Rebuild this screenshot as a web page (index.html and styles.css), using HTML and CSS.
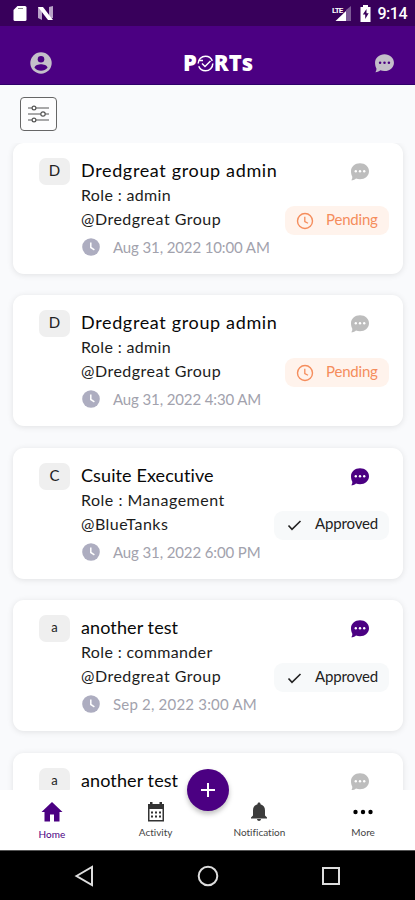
FILE: index.html
```html
<!DOCTYPE html>
<html lang="en">
<head>
  <meta charset="UTF-8">
  <meta name="viewport" content="width=device-width, initial-scale=1">
  <title>PORTs</title>
  <link rel="stylesheet" href="styles.css">
</head>
<body>

<!-- shared icons -->
<svg class="sprite" width="0" height="0">
  <symbol id="chat" viewBox="0 0 20 20">
    <path fill="currentColor" d="M10 1.2c5 0 9 3.500 9 8s-4 8-9 8c-1.500 0-2.800-.3-4-.8-1 .9-2.500 1.700-4.800 1.900.9-1 1.200-2.200 1.100-3.600C1.500 13.200 1 11.300 1 9.200c0-4.500 4-8 9-8z"/>
    <g><circle cx="5.800" cy="9.300" r="1.200"/><circle cx="10" cy="9.300" r="1.200"/><circle cx="14.200" cy="9.300" r="1.200"/></g>
  </symbol>
  <symbol id="clock" viewBox="0 0 18 18">
    <circle cx="9" cy="9" r="8.800" fill="#adadc0"/>
    <path d="M8.800 4.500v5l3.600 2.300" fill="none" stroke="#fff" stroke-width="1.500"/>
  </symbol>
  <symbol id="pending" viewBox="0 0 18 18">
    <circle cx="9" cy="9" r="7.500" fill="none" stroke="currentColor" stroke-width="1.400"/>
    <path d="M8.800 4.800v4.700l3.200 1.800" fill="none" stroke="currentColor" stroke-width="1.300"/>
  </symbol>
  <symbol id="check" viewBox="0 0 18 18">
    <path d="M3.500 9.500l3.500 3.800 8.500-8.300" fill="none" stroke="currentColor" stroke-width="1.600"/>
  </symbol>
</svg>

<div class="app">
  <div class="status">
    <svg width="14" height="17" viewBox="0 0 14 17"><path fill="#fff" d="M4.500 1H12a1.500 1.500 0 0 1 1.500 1.500v12A1.500 1.500 0 0 1 12 16H2a1.500 1.500 0 0 1-1.500-1.500V5z"/><path d="M5 3.500h5" stroke="#888" stroke-width="1"/></svg>
    <svg class="n-logo" width="17" height="15" viewBox="0 0 17 15"><path fill="#b9a3c8" d="M1 1l4 1v12l-4-2zM12 1l4-1v12l-4 1z"/><path fill="#fff" d="M1 1h5l10 13h-5z"/></svg>
    <div class="status-right">
      <svg width="20" height="17" viewBox="0 0 20 17"><path fill="#7d5a96" d="M14 5l5-4v15h-5z"/><path fill="#fff" d="M3.500 16L14 6v10z"/><text x="0" y="7.500" class="lte">LTE</text></svg>
      <svg class="battery" width="11" height="17" viewBox="0 0 11 17"><path fill="#fff" d="M3 2V0h5v2h2.500v15H.5V2z"/><path fill="#38005b" d="M6.500 4L2.800 9.500h2.400V14l3.500-5.800H6.500z"/></svg>
      <span class="time">9:14</span>
    </div>
  </div>

  <div class="header">
    <svg width="22" height="22" viewBox="0 0 22 22"><circle cx="11" cy="11" r="10.700" fill="#c4bfca"/><circle cx="11" cy="7.200" r="3.300" fill="#4b0082"/><path fill="#4b0082" d="M4.500 15.700c0-2.400 4.300-3.500 6.500-3.500s6.500 1.100 6.500 3.500c-3 4-10 4-13 0z"/></svg>
    <div class="logo">
      <span>P</span>
      <svg width="17" height="17" viewBox="0 0 17 17"><circle cx="8.500" cy="8.500" r="7.300" fill="none" stroke="#fff" stroke-width="1.500" stroke-dasharray="20 2.900"/><path d="M2 5.500h4M5 8.500l3 3 5.500-5.500" fill="none" stroke="#fff" stroke-width="1.500"/></svg>
      <span>RTs</span>
    </div>
    <svg class="chat-top" width="21" height="21"><use href="#chat"/></svg>
  </div>

  <div class="filter-row">
    <button class="filter">
      <svg width="21" height="20" viewBox="0 0 21 20" fill="#fff" stroke="#555" stroke-width="1.200"><path d="M0 4h21M0 10h21M0 16h21"/><circle cx="6" cy="4" r="1.900"/><circle cx="15" cy="10" r="2.200"/><circle cx="6" cy="16" r="1.900"/></svg>
    </button>
  </div>

  <div class="list">
    <div class="card">
      <div class="tag">D</div>
      <div class="info">
        <h3 class="wider">Dredgreat group admin</h3>
        <p>Role : admin</p>
        <p class="wide">@Dredgreat Group</p>
        <div class="date"><svg width="18" height="18"><use href="#clock"/></svg><span>Aug 31, 2022 10:00 AM</span></div>
      </div>
      <div class="side">
        <svg class="chat" width="20" height="20"><use href="#chat"/></svg>
        <div class="badge pending"><svg width="18" height="18"><use href="#pending"/></svg><span>Pending</span></div>
      </div>
    </div>

    <div class="card">
      <div class="tag">D</div>
      <div class="info">
        <h3 class="wider">Dredgreat group admin</h3>
        <p>Role : admin</p>
        <p class="wide">@Dredgreat Group</p>
        <div class="date"><svg width="18" height="18"><use href="#clock"/></svg><span>Aug 31, 2022 4:30 AM</span></div>
      </div>
      <div class="side">
        <svg class="chat" width="20" height="20"><use href="#chat"/></svg>
        <div class="badge pending"><svg width="18" height="18"><use href="#pending"/></svg><span>Pending</span></div>
      </div>
    </div>

    <div class="card">
      <div class="tag">C</div>
      <div class="info">
        <h3>Csuite Executive</h3>
        <p class="wide">Role : Management</p>
        <p class="wide">@BlueTanks</p>
        <div class="date"><svg width="18" height="18"><use href="#clock"/></svg><span>Aug 31, 2022 6:00 PM</span></div>
      </div>
      <div class="side">
        <svg class="chat active" width="20" height="20"><use href="#chat"/></svg>
        <div class="badge approved"><svg width="18" height="18"><use href="#check"/></svg><span>Approved</span></div>
      </div>
    </div>

    <div class="card">
      <div class="tag small">a</div>
      <div class="info">
        <h3>another test</h3>
        <p>Role : commander</p>
        <p class="wide">@Dredgreat Group</p>
        <div class="date loose"><svg width="18" height="18"><use href="#clock"/></svg><span>Sep 2, 2022 3:00 AM</span></div>
      </div>
      <div class="side">
        <svg class="chat active" width="20" height="20"><use href="#chat"/></svg>
        <div class="badge approved"><svg width="18" height="18"><use href="#check"/></svg><span>Approved</span></div>
      </div>
    </div>

    <div class="card">
      <div class="tag small">a</div>
      <div class="info">
        <h3>another test</h3>
      </div>
      <div class="side">
        <svg class="chat" width="20" height="20"><use href="#chat"/></svg>
      </div>
    </div>
  </div>

  <div class="tabs">
    <div class="tab current">
      <svg width="22" height="22" viewBox="0 0 22 22"><path fill="currentColor" d="M11 1l10.500 10H18.500v9.500H13v-7H9v7H3.500V11H.5z"/></svg>
      <span>Home</span>
    </div>
    <div class="tab">
      <svg width="22" height="22" viewBox="0 0 22 22"><path fill="#333" d="M3 3h2V1h2.500v2h7V1H17v2h2v17.500H3z"/><path fill="#fff" d="M4.500 8h13v11h-13z"/><path d="M6 11.500h10M6 15.500h10" stroke="#333" stroke-width="2" stroke-dasharray="2 2"/></svg>
      <span>Activity</span>
    </div>
    <div class="tab">
      <svg width="22" height="22" viewBox="0 0 22 22"><path fill="#3c3c3c" d="M11 1.500c1 0 1.500.7 1.500 1.700 3 .9 4.500 3 4.500 6.300v5l2 2v1H3v-1l2-2v-5c0-3.300 1.500-5.400 4.500-6.300 0-1 .5-1.700 1.500-1.700zM9 18h4c0 2.500-4 2.500-4 0z"/></svg>
      <span>Notification</span>
    </div>
    <div class="tab">
      <svg width="22" height="22" viewBox="0 0 22 22"><circle cx="3.500" cy="11" r="2.200"/><circle cx="11" cy="11" r="2.200"/><circle cx="18.500" cy="11" r="2.200"/></svg>
      <span>More</span>
    </div>
    <button class="add"><svg width="18" height="18" viewBox="0 0 18 18"><path d="M9 2v14M2 9h14" stroke="#fff" stroke-width="2"/></svg></button>
  </div>

  <div class="android">
    <svg width="22" height="22" viewBox="0 0 22 22"><path d="M2.500 11L18 2v18z"/></svg>
    <svg width="22" height="22" viewBox="0 0 22 22"><circle cx="11" cy="11" r="9.300"/></svg>
    <svg width="22" height="22" viewBox="0 0 22 22"><rect x="3" y="3" width="16" height="16"/></svg>
  </div>
</div>

</body>
</html>
```
FILE: styles.css
```css
* {
  box-sizing: border-box;
}
body {
  margin: 0;
  font-family: Lato, "Open Sans", sans-serif;
  font-variant-ligatures: none;
  color: #222;
}
h3, p {
  margin: 0;
  white-space: nowrap;
}
svg {
  display: block;
  flex: none;
}
.sprite {
  display: none;
}
.app {
  width: 415px;
  height: 900px;
  display: flex;
  flex-direction: column;
  background: #f9fafc;
  overflow: hidden;
}
.status {
  height: 26px;
  flex: none;
  background: #38005b;
  display: flex;
  align-items: center;
  padding: 1px 8px 0 13px;
}
.n-logo {
  margin-left: 10px;
}
.status-right {
  margin-left: auto;
  display: flex;
  align-items: center;
}
.lte {
  font: bold 8px Roboto, sans-serif;
  fill: #fff;
  letter-spacing: -0.8px;
}
.battery {
  margin: 0 7px 0 8px;
}
.time {
  font: 500 16px/18px Roboto, sans-serif;
  color: #fff;
  letter-spacing: -0.5px;
}
.header {
  height: 59px;
  flex: none;
  background: #4b0082;
  border-bottom: 1px solid #30006a;
  display: flex;
  align-items: center;
  justify-content: space-between;
  padding: 16px 20px 0 30px;
}
.logo {
  display: flex;
  align-items: center;
  margin-left: 10px;
  color: #fff;
  font-family: "Open Sans", sans-serif;
  font-size: 22px;
  line-height: 22px;
  font-weight: 800;
}
.logo span {
  margin-top: -2px;
}
.chat-top, .chat {
  fill: #fff;
}
.chat-top {
  color: #c4bfca;
  fill: #4b0082;
}
.filter-row {
  height: 58px;
  flex: none;
  padding: 12px 20px;
}
.filter {
  width: 37px;
  height: 34px;
  padding: 0;
  display: flex;
  align-items: center;
  justify-content: center;
  background: #fdfdfe;
  border: 1px solid #666;
  border-radius: 4px;
}
.list {
  flex: 1;
  min-height: 0;
  overflow: hidden;
  padding: 0 12px 0 13px;
}
.card {
  display: flex;
  height: 131px;
  margin-bottom: 21.400px;
  padding: 14px 14px 0 26px;
  background: #fff;
  border-radius: 11px;
  box-shadow: 0 1px 6px rgba(0, 0, 0, 0.1);
}
.tag {
  width: 31px;
  height: 27px;
  margin: 1px 11px 0 0;
  border-radius: 7px;
  background: #efefef;
  text-align: center;
  font-size: 15px;
  line-height: 25px;
}
.tag.small {
  font-size: 13px;
}
.info {
  flex: 1;
  min-width: 0;
  color: #1c1c1c;
}
.info h3 {
  margin: 4px 0 3px;
  font-size: 18px;
  line-height: 19px;
  font-weight: 400;
  letter-spacing: 0.1px;
  color: #080808;
}
.info p {
  font-size: 16px;
  line-height: 24px;
  letter-spacing: 0.35px;
}
.info p.wide {
  letter-spacing: 0.5px;
}
.info h3.wider {
  letter-spacing: 0.65px;
}
.date {
  display: flex;
  align-items: center;
  gap: 13px;
  height: 32px;
  padding-left: 1px;
  font-size: 15px;
  letter-spacing: -0.12px;
  color: #a2a2ad;
  white-space: nowrap;
}
.date.loose {
  letter-spacing: 0.2px;
}
.side {
  display: flex;
  flex-direction: column;
  align-items: flex-end;
}
.chat {
  margin: 5px 19px 24px 0;
  color: #bdbdbd;
}
.chat.active {
  color: #4b0082;
}
.badge {
  display: flex;
  align-items: center;
  height: 29px;
  border-radius: 9px;
  padding: 0 11px;
  font-size: 15px;
}
.badge span {
  padding-bottom: 4px;
}
.pending {
  width: 104px;
  gap: 12px;
  background: #fff3ec;
  color: #f58d5c;
  letter-spacing: -0.2px;
}
.approved {
  width: 115px;
  gap: 12px;
  background: #f7f9fa;
  color: #222;
  letter-spacing: -0.15px;
}
.tabs {
  position: relative;
  height: 60px;
  flex: none;
  display: flex;
  background: #fff;
}
.tab {
  flex: 1;
  display: flex;
  flex-direction: column;
  align-items: center;
  padding-top: 11px;
  font-size: 10px;
  line-height: 12px;
  color: #444;
}
.tab span {
  margin-top: 3px;
}
.tab.current {
  color: #4b0082;
}
.tab.current span {
  margin-top: 5px;
}
.add {
  position: absolute;
  left: 187px;
  top: -21px;
  width: 42px;
  height: 42px;
  padding: 0;
  border: none;
  border-radius: 50%;
  background: #4b0082;
  display: flex;
  align-items: center;
  justify-content: center;
  box-shadow: 0 3px 5px rgba(0, 0, 0, 0.25);
}
.android {
  height: 50px;
  flex: none;
  display: flex;
  align-items: center;
  justify-content: space-between;
  padding: 0 73px 0 74px;
  background: #000;
  border-top: 1px solid #555;
}
.android svg {
  fill: none;
  stroke: #ddd;
  stroke-width: 2;
}
```
